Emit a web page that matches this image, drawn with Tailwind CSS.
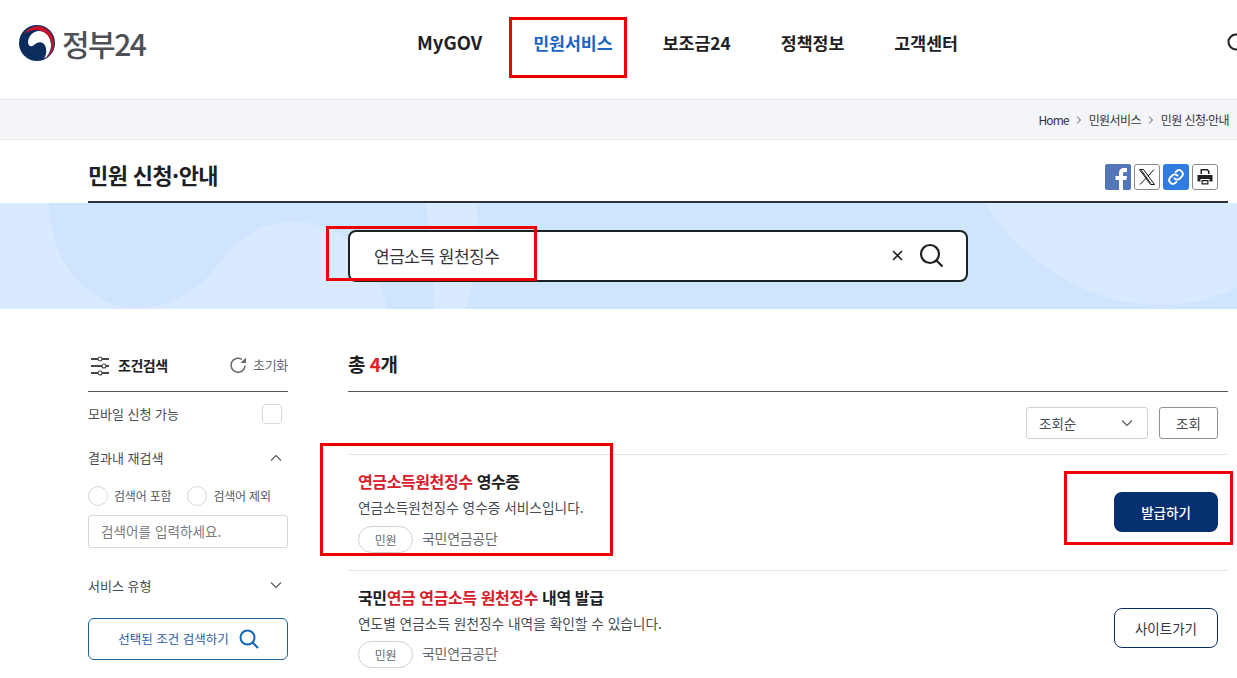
<!DOCTYPE html>
<html lang="ko">
<head>
  <meta charset="UTF-8">
  <title>민원 신청·안내 | 정부24</title>
  <script src="https://cdn.jsdelivr.net/npm/@tailwindcss/browser@4"></script>
</head>
<body class="relative h-[678px] w-[1237px] overflow-hidden bg-white font-['Noto_Sans_CJK_KR','Noto_Sans',sans-serif] text-[#1e2124]">

  <!-- header -->
  <header class="relative flex h-[100px] items-center border-b border-[#e1e3ea] pb-[14px]">
    <div class="ml-[19px] flex w-[298px] items-center gap-[7px]">
      <svg class="h-9 w-9" viewBox="0 0 36 36">
        <circle cx="18" cy="18" r="18" fill="#0b2d5e"/>
        <path d="M9 18C9 11 14 6 20 6c7 0 12 6 12 14 0 6-3 11-7 14 3-5 3-11 0-15-3-3-7-2-10 1-2 2-5 2-6-2z" fill="#fff"/>
        <path d="M5 9C9 3 15 1 20 1c9 1 15 9 15 18 0 6-4 12-10 16 6-5 8-11 7-17C31 10 24 5 17 5 12 5 8 7 5 9z" fill="#c8102e"/>
      </svg>
      <span class="text-[30px] leading-none font-medium tracking-[-1.5px] text-[#4d5157]">정부24</span>
    </div>
    <nav class="flex items-center text-[17.300px] font-bold">
      <a class="ml-[100px] text-[18.500px]">MyGOV</a>
      <a class="ml-[51px] text-[#1b64c4]">민원서비스</a>
      <a class="ml-[50px]">보조금24</a>
      <a class="ml-[50px]">정책정보</a>
      <a class="ml-[50px]">고객센터</a>
    </nav>
    <svg class="absolute top-[33px] left-[1227px] h-5 w-5" viewBox="0 0 20 20" fill="none" stroke="#1e2124" stroke-width="2"><circle cx="9" cy="9" r="7.500"/><path d="M14.500 14.500 19 19"/></svg>
  </header>

  <!-- breadcrumb -->
  <div class="flex h-[40px] items-center justify-end gap-[6px] border-b border-[#e8e9ec] bg-[#f4f5f9] pr-[8px] text-[12px] tracking-[-0.6px] text-[#33363d]">
    <span class="tracking-[-0.9px]">Home</span>
    <svg class="h-2 w-2" viewBox="0 0 8 8" fill="none" stroke="#555" stroke-width="1"><path d="m2 .5 3.500 3.500L2 7.500"/></svg>
    <span>민원서비스</span>
    <svg class="h-2 w-2" viewBox="0 0 8 8" fill="none" stroke="#555" stroke-width="1"><path d="m2 .5 3.500 3.500L2 7.500"/></svg>
    <span>민원 신청·안내</span>
  </div>

  <!-- title -->
  <div class="mr-[9px] ml-[88px] flex h-[63px] items-center justify-between border-b-2 border-[#2d3036]">
    <h1 class="mt-[8px] text-[22px] font-bold tracking-[-0.6px]">민원 신청·안내</h1>
    <div class="mt-[13px] mr-[10px] flex gap-[3px]">
      <span class="flex h-[26px] w-[26px] items-end justify-center overflow-hidden rounded-[2px] bg-[#5276b8]">
        <svg class="h-[24px] w-[24px]" viewBox="0 0 24 24" fill="#fff"><path d="M13 24V14h-3.500v-4H13V7.500C13 4 15 2 18 2h3v4h-2c-1.500 0-2 .7-2 2v2h4l-.7 4H17v10z"/></svg>
      </span>
      <span class="flex h-[26px] w-[26px] items-center justify-center rounded-[3px] border border-[#8a8a8a] bg-white">
        <svg class="h-[18px] w-[18px]" viewBox="0 0 18 18" fill="none" stroke="#111" stroke-width="1"><path d="M1.500 1.500h4l11 15h-4zM16 1.500 10 8.200M8 10.300 2 16.500"/><path d="M3.500 2.500 12.800 15.500"/></svg>
      </span>
      <span class="flex h-[26px] w-[26px] items-center justify-center rounded-[3px] bg-[#2f7de1]">
        <svg class="h-[18px] w-[18px]" viewBox="0 0 24 24" fill="none" stroke="#fff" stroke-width="2.600" stroke-linecap="round"><path d="M10 14a5 5 0 0 0 7 0l3-3a5 5 0 0 0-7-7l-1.500 1.500"/><path d="M14 10a5 5 0 0 0-7 0l-3 3a5 5 0 0 0 7 7l1.500-1.500"/></svg>
      </span>
      <span class="flex h-[26px] w-[26px] items-center justify-center rounded-[3px] border border-[#8a8a8a] bg-white">
        <svg class="h-[18px] w-[18px]" viewBox="0 0 18 18" fill="#222"><path d="M4.500 1h7l2 2v3h-1.500V3.500L11 2.500H6v3.500H4.500z"/><path d="M1.500 7h15v6.500h-3V11h-9v2.500h-3z"/><path d="M5.500 12h7v4.500h-7zm1.200 1.200v2.100h4.600v-2.100z" fill-rule="evenodd"/></svg>
      </span>
    </div>
  </div>

  <!-- search banner -->
  <div class="relative flex h-[106px] items-center justify-center overflow-hidden bg-[#cfe5fd]">
    <svg class="absolute inset-0 h-full w-full" viewBox="0 0 1237 106" fill="#d9eafe">
      <path d="M0 0h49c0 60 41 105 87 105 39 0 64-20 82-43 22-30 47-43 75-43 27 0 52 11 69 31 13 18 21 35 25 56H0z"/>
      <path d="M425 0c7 30 12 70 8 106h33c9-36 14-76 10-106z"/>
      <path d="M985 0c40 62 105 102 175 102 30 0 55-7 77-18V0z"/>
    </svg>
    <div class="relative mt-[-1px] ml-[79px] flex h-[52px] w-[620px] items-center rounded-[8px] border-2 border-[#1e2124] bg-white pr-[22px] pl-[24px]">
      <span class="flex-1 text-[17px] tracking-[-0.5px] text-[#33363d]">연금소득 원천징수</span>
      <svg class="mr-[16px] h-[11px] w-[11px]" viewBox="0 0 11 11" stroke="#222" stroke-width="1.700"><path d="m1 1 9 9M10 1l-9 9"/></svg>
      <svg class="h-[25px] w-[25px]" viewBox="0 0 25 25" fill="none" stroke="#1e2124" stroke-width="2.200"><circle cx="11" cy="11" r="9"/><path d="m17.500 17.500 6 6"/></svg>
    </div>
  </div>

  <!-- content -->
  <div class="flex gap-[60px] pl-[88px]">
    <aside class="w-[200px] shrink-0 pt-[42px]">
      <div class="flex h-[41px] items-start justify-between border-b border-[#55585e] pt-[4px]">
        <div class="flex items-center gap-[8px]">
          <svg class="ml-[2px] h-[20px] w-[20px]" viewBox="0 0 20 20" fill="none" stroke="#444" stroke-width="1.800"><path d="M1 3h7M12 3h7M1 10h11M16 10h3M1 17h7M12 17h7"/><circle cx="10" cy="3" r="2" stroke-width="1.200"/><circle cx="14" cy="10" r="2" stroke-width="1.200"/><circle cx="10" cy="17" r="2" stroke-width="1.200"/></svg>
          <b class="text-[14px] tracking-[-0.5px]">조건검색</b>
        </div>
        <div class="flex items-center gap-[6px] text-[13px] tracking-[-0.3px] text-[#666a70]">
          <svg class="h-[18px] w-[18px]" viewBox="0 0 18 18" fill="none" stroke="#666" stroke-width="1.500"><path d="M16 9.500A7 7 0 1 1 13 3.500"/><path d="M11.500 7h5.500V1.500z" fill="#666" stroke="none"/></svg>
          <span>초기화</span>
        </div>
      </div>
      <div class="mt-[12px] mr-[6px] flex items-center justify-between text-[13px] text-[#464c53]">
        <span>모바일 신청 가능</span>
        <span class="h-5 w-5 rounded-[4px] border border-[#d6d8dc] bg-white"></span>
      </div>
      <div class="mt-[24px] mr-[6px] flex items-center justify-between text-[13px] text-[#464c53]">
        <span>결과내 재검색</span>
        <svg class="h-[12px] w-[12px]" viewBox="0 0 12 12" fill="none" stroke="#555" stroke-width="1.100"><path d="m1 8.500 5-5 5 5"/></svg>
      </div>
      <div class="mt-[18px] flex items-center text-[12px] tracking-[-0.2px] text-[#555a60]">
        <span class="h-5 w-5 rounded-full border border-[#d6d8dc]"></span>
        <span class="ml-[6px]">검색어 포함</span>
        <span class="ml-[16px] h-5 w-5 rounded-full border border-[#d6d8dc]"></span>
        <span class="ml-[6px]">검색어 제외</span>
      </div>
      <div class="mt-[9px] flex h-[33px] items-center rounded-[3px] border border-[#d6d8dc] pl-[12px] text-[13.500px] tracking-[0.1px] text-[#777b82]">검색어를 입력하세요.</div>
      <div class="mt-[28px] mr-[6px] flex items-center justify-between text-[13px] text-[#464c53]">
        <span>서비스 유형</span>
        <svg class="h-[12px] w-[12px]" viewBox="0 0 12 12" fill="none" stroke="#555" stroke-width="1.100"><path d="m1 3.500 5 5 5-5"/></svg>
      </div>
      <div class="mt-[23px] flex h-[42px] items-center justify-center gap-[10px] rounded-[6px] border border-[#17629c] pl-[1px] text-[12.500px] text-[#2a5aa8]">
        <span>선택된 조건 검색하기</span>
        <svg class="h-[20px] w-[20px]" viewBox="0 0 20 20" fill="none" stroke="#1468b4" stroke-width="2"><circle cx="8.500" cy="8.500" r="7"/><path d="m13.500 13.500 5.500 5.500"/></svg>
      </div>
    </aside>

    <main class="w-[880px] shrink-0">
      <div class="flex h-[83px] items-start border-b border-[#55585e] pt-[40px] text-[19px] leading-[30px] font-bold tracking-[-0.5px]">
        <span>총 <span class="text-[#e0202b]">4</span>개</span>
      </div>
      <div class="flex h-[63px] items-start justify-end gap-[11px] border-b border-[#e4e5e8] pt-[15px] pr-[10px] text-[13.500px] text-[#464c53]">
        <div class="flex h-[32px] w-[122px] items-center justify-between rounded-[3px] border border-[#cfd1d5] pr-[14px] pl-[12px]">
          <span>조회순</span>
          <svg class="h-[12px] w-[12px]" viewBox="0 0 12 12" fill="none" stroke="#555" stroke-width="1.100"><path d="m1 3.500 5 5 5-5"/></svg>
        </div>
        <div class="flex h-[32px] w-[59px] items-center justify-center rounded-[3px] border border-[#8f9297]">조회</div>
      </div>

      <div class="flex h-[116px] items-start justify-between border-b border-[#e4e5e8] px-[10px] pt-[15px]">
        <div>
          <div class="text-[16px] leading-[22px] font-bold tracking-[-0.4px]"><span class="text-[#d7202b]">연금소득원천징수</span> 영수증</div>
          <p class="mt-[5px] text-[13.700px] leading-[20px] text-[#464c53]">연금소득원천징수 영수증 서비스입니다.</p>
          <div class="mt-[9px] flex items-center gap-[9px] text-[14px] tracking-[-0.3px] text-[#666a70]">
            <span class="flex h-[27px] w-[55px] items-center justify-center rounded-full border border-[#cfd1d5] text-[12px]">민원</span>
            <span class="mt-[-2px]">국민연금공단</span>
          </div>
        </div>
        <div class="mt-[22px] flex h-[40px] w-[104px] items-center justify-center rounded-[8px] bg-[#052f6e] text-[13.500px] font-medium text-white">발급하기</div>
      </div>

      <div class="flex h-[116px] items-start justify-between px-[10px] pt-[15px]">
        <div>
          <div class="text-[16px] leading-[22px] font-bold tracking-[-0.4px]">국민<span class="text-[#d7202b]">연금 연금소득 원천징수</span> 내역 발급</div>
          <p class="mt-[5px] text-[13.700px] leading-[20px] text-[#464c53]">연도별 연금소득 원천징수 내역을 확인할 수 있습니다.</p>
          <div class="mt-[8px] flex items-center gap-[9px] text-[14px] tracking-[-0.3px] text-[#666a70]">
            <span class="flex h-[27px] w-[55px] items-center justify-center rounded-full border border-[#cfd1d5] text-[12px]">민원</span>
            <span class="mt-[-2px]">국민연금공단</span>
          </div>
        </div>
        <div class="mt-[22px] flex h-[40px] w-[104px] items-center justify-center rounded-[8px] border border-[#0b2d5e] text-[13.500px] text-[#33363d]">사이트가기</div>
      </div>
    </main>
  </div>

  <!-- red annotation boxes over the page -->
  <div class="absolute top-[17px] left-[509px] h-[61px] w-[118px] border-[3px] border-[#ee0000]"></div>
  <div class="absolute top-[226px] left-[326px] h-[55px] w-[211px] border-[3px] border-[#ee0000]"></div>
  <div class="absolute top-[443px] left-[320px] h-[113px] w-[293px] border-[3px] border-[#ee0000]"></div>
  <div class="absolute top-[471px] left-[1064px] h-[74px] w-[169px] border-[3px] border-[#ee0000]"></div>
</body>
</html>
